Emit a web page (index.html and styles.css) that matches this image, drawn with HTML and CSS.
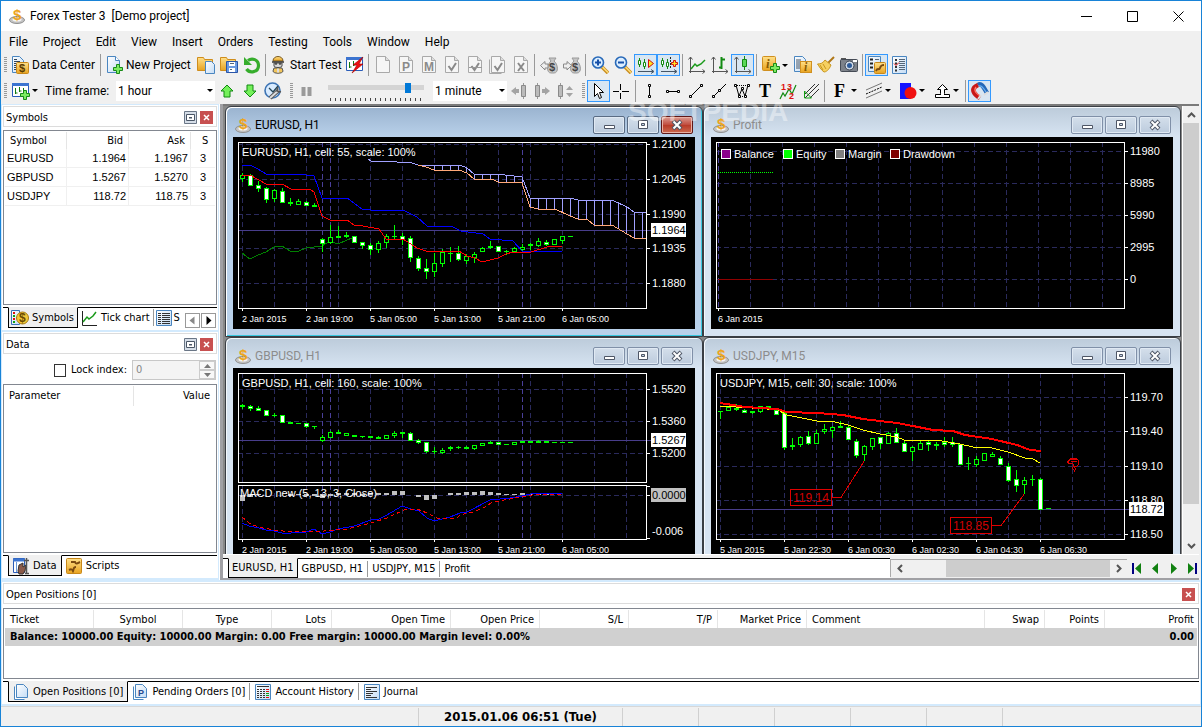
FILE: index.html
```html
<!DOCTYPE html>
<html lang="en">
<head>
<meta charset="utf-8">
<title>Forex Tester 3 [Demo project]</title>
<link rel="stylesheet" href="styles.css">
</head>
<body>
<svg class="defs" aria-hidden="true">
  <defs>
    <linearGradient id="gold" x1="0" y1="0" x2="0" y2="1"><stop offset="0" stop-color="#ffe08a"/><stop offset="1" stop-color="#e8a320"/></linearGradient>
    <linearGradient id="paper" x1="0" y1="0" x2="1" y2="1"><stop offset="0" stop-color="#ffffff"/><stop offset="1" stop-color="#c4dcf5"/></linearGradient>
  </defs>
  <symbol id="i-coin" viewBox="0 0 18 18"><ellipse cx="9" cy="13" rx="7.500" ry="3.500" fill="#c4c4c4" stroke="#909090"/><ellipse cx="9" cy="12.500" rx="4.500" ry="2" fill="#f4f4f4"/></symbol>
  <symbol id="i-data" viewBox="0 0 18 18"><path d="M1.500.5h7l4 4v12h-11z" fill="url(#paper)" stroke="#4a86c0"/><path d="M3 3.500h3M3 5.500h6M3 7.500h5M3 9.500h3M3 11.500h3M3 13.500h3" stroke="#345"/><rect x="5.500" y="6.500" width="12" height="11" rx="1" fill="url(#gold)" stroke="#c8881a"/></symbol>
  <symbol id="i-newdoc" viewBox="0 0 18 18"><path d="M1.500.5h8l4 4v12h-12z" fill="url(#paper)" stroke="#4a86c0"/><path d="M9.500.5v4h4" fill="#fff" stroke="#4a86c0"/><path d="M10.500 8.500h3v3h3v3h-3v3h-3v-3h-3v-3h3z" fill="#7dea62" stroke="#178a17"/></symbol>
  <symbol id="i-open" viewBox="0 0 18 18"><path d="M.5 14.500v-13h6l1 2h8v11z" fill="url(#gold)" stroke="#cf8d1c"/><path d="M8.500 5.500h6l3 3v9h-9z" fill="url(#paper)" stroke="#4a86c0"/></symbol>
  <symbol id="i-fsave" viewBox="0 0 18 18"><path d="M.5 14.500v-13h6l1 2h8v11z" fill="url(#gold)" stroke="#cf8d1c"/><path d="M6.500 5.500h11v11h-11z" fill="#6b9ae0" stroke="#2a55a8"/><path d="M9 6h6v4H9zM9 12h6v4H9z" fill="#fff"/><path d="M10 7.500h4M10 13.500h2" stroke="#567"/></symbol>
  <symbol id="i-refresh" viewBox="0 0 18 18"><path d="M5 4.500c4-3 10.500-1 10.500 5 0 7-9 8-12 3.500" fill="none" stroke="#36ad2c" stroke-width="3.200"/><path d="M1 1v8h8z" fill="#36ad2c"/></symbol>
  <symbol id="i-coolie" viewBox="0 0 18 18"><path d="M4 5c0-6 10-6 10 0z" fill="url(#gold)" stroke="#7a5a22"/><path d="M3 6h12" stroke="#333" stroke-width="1.500"/><path d="M5 7h8v3c0 2-8 2-8 0z" fill="#d9d9d9" stroke="#444"/><path d="M6 8h2M10 8h2" stroke="#111"/><path d="M5 12h8l1 3c0 3-10 3-10 0z" fill="#f2c55a" stroke="#555"/><path d="M8 12.500h2v4H8z" fill="#ddd"/></symbol>
  <symbol id="i-chartwin" viewBox="0 0 18 18"><path d="M.5 1.500h16v13H.5z" fill="#fff" stroke="#2a5cb8"/><path d="M0 1h17v3H0z" fill="#3c74d0"/><path d="M3.500 6v6M3.500 11h2M7.500 5v5M7.500 9h2M11.500 6v5" stroke="#127a12" fill="none"/></symbol>
  <symbol id="i-bolt" viewBox="0 0 18 18"><use href="#i-chartwin"/><path d="M17 1L7 9h4l-5 8 11-9h-4z" fill="#f01010" stroke="#a00000" stroke-width=".6"/></symbol>
  <symbol id="i-pluschart" viewBox="0 0 18 18"><use href="#i-chartwin"/><path d="M11.500 8.500h3v3h3v3h-3v3h-3v-3h-3v-3h3z" fill="#7dea62" stroke="#178a17"/></symbol>
  <symbol id="i-gdoc" viewBox="0 0 18 18"><path d="M2.500.5h9l4 4v12h-13z" fill="#f6f6f6" stroke="#a9a9a9"/><path d="M11.500.5v4h4" fill="#ddd" stroke="#a9a9a9"/></symbol>
  <symbol id="i-gcheck" viewBox="0 0 18 18"><use href="#i-gdoc"/><path d="M5.500 10l3 4 4.500-7" fill="none" stroke="#8a8a8a" stroke-width="2"/></symbol>
  <symbol id="i-gcheck2" viewBox="0 0 18 18"><use href="#i-gcheck"/><path d="M3 11.500h13" stroke="#999"/></symbol>
  <symbol id="i-gcheck3" viewBox="0 0 18 18"><path d="M.5 3.500v14h12" fill="none" stroke="#a9a9a9"/><use href="#i-gcheck"/></symbol>
  <symbol id="i-gx" viewBox="0 0 18 18"><use href="#i-gdoc"/><path d="M6 7l6 8M12 7l-6 8" stroke="#8a8a8a" stroke-width="2"/></symbol>
  <symbol id="i-bag" viewBox="0 0 18 18"><path d="M9 2h7l-2 3c4 3 5 12 0 12h-3C6 17 7 8 11 5z" fill="#c6c6c6" stroke="#9a9a9a"/></symbol>
  <symbol id="i-bagl" viewBox="0 0 18 18"><use href="#i-bag"/><path d="M.5 9.500L5 5.500v2.500h3v4H5v2z" fill="#eee" stroke="#8a8a8a"/></symbol>
  <symbol id="i-bagr" viewBox="0 0 18 18"><use href="#i-bag"/><path d="M8.500 9.500L4 5.500v2.500H.5v4H4v2z" fill="#eee" stroke="#8a8a8a"/></symbol>
  <symbol id="i-lens" viewBox="0 0 18 18"><path d="M11 11l6 6" stroke="#c98d1e" stroke-width="3.500"/><path d="M11.500 11l5.500 5.500" stroke="#ffdf7a" stroke-width="1.500"/><circle cx="7" cy="6.500" r="5.500" fill="#dceeff" stroke="#2869b8" stroke-width="1.600"/><path d="M4 6.500h6" stroke="#1650a8" stroke-width="2"/></symbol>
  <symbol id="i-zin" viewBox="0 0 18 18"><use href="#i-lens"/><path d="M7 3.500v6" stroke="#1650a8" stroke-width="2"/></symbol>
  <symbol id="i-candles" viewBox="0 0 18 18"><path d="M2.500 2v9M7.500 3v10" stroke="#128a12"/><path d="M1.500 4.500h2v4h-2zM6.500 6.500h2v4h-2z" fill="#fff" stroke="#128a12"/><path d="M1 15.500h15M14 13.500l3 2-3 2" fill="none" stroke="#456"/></symbol>
  <symbol id="i-autoscroll" viewBox="0 0 18 18"><use href="#i-candles"/><path d="M11.500 3.500l5 4-5 4z" fill="#ffe420" stroke="#d01010"/></symbol>
  <symbol id="i-shift" viewBox="0 0 18 18"><use href="#i-candles"/><path d="M10.500 1v12" stroke="#222" stroke-dasharray="2 1"/><path d="M13.500 4.500h2v2h2v2h-2v2h-2v-2h-2v-2h2z" fill="#ffe420" stroke="#d01010"/></symbol>
  <symbol id="i-axes" viewBox="0 0 18 18"><path d="M2.500 17V1M.5 3.500L2.500 1l2 2.500M1 15.500h16M14.500 13.500l2.500 2-2.500 2" fill="none" stroke="#555"/></symbol>
  <symbol id="i-line" viewBox="0 0 18 18"><use href="#i-axes"/><path d="M3 13l4-5 2 2 4-2 4-4" fill="none" stroke="#1a9a1a" stroke-width="1.500"/></symbol>
  <symbol id="i-tick" viewBox="0 0 18 18"><path d="M2.500 2v14.500H17" fill="none" stroke="#222"/><path d="M3 13l4-5 2 2 4-3 3-4" fill="none" stroke="#1a9a1a" stroke-width="1.500"/></symbol>
  <symbol id="i-bars" viewBox="0 0 18 18"><use href="#i-axes"/><path d="M10.500 1v12M8 11.500h2M11 3.500h3" fill="none" stroke="#138a13" stroke-width="2"/></symbol>
  <symbol id="i-candle" viewBox="0 0 18 18"><use href="#i-axes"/><path d="M10.500 0v14" stroke="#138a13"/><path d="M8.500 3.500h4v7h-4z" fill="#59d859" stroke="#138a13"/></symbol>
  <symbol id="i-info" viewBox="0 0 18 18"><rect x=".5" y=".5" width="13" height="14" rx="1" fill="url(#gold)" stroke="#d09020"/></symbol>
  <symbol id="i-infoplus" viewBox="0 0 18 18"><use href="#i-info"/><path d="M11.500 7.500h3v3h3v3h-3v3h-3v-3h-3v-3h3z" fill="#7dea62" stroke="#178a17"/></symbol>
  <symbol id="i-infodoc" viewBox="0 0 18 18"><path d="M.5.5h8l3 3v12H.5z" fill="url(#paper)" stroke="#4a86c0"/><path d="M2 4h5M2 6h5M2 8h5M2 10h5M2 12h5" stroke="#456"/><rect x="6.500" y="5.500" width="11" height="11" fill="url(#gold)" stroke="#d09020"/></symbol>
  <symbol id="i-broom" viewBox="0 0 18 18"><path d="M11 7l6-6" stroke="#b07818" stroke-width="2"/><path d="M8 4l6 5c-2 5-5 7-7 7C4 14 2 10 .5 8 4 8 6 7 8 4z" fill="#f6d060" stroke="#c8961e"/><path d="M3 9l3 5M6 8l3 5" stroke="#c8961e"/></symbol>
  <symbol id="i-camera" viewBox="0 0 18 18"><path d="M1 2h5v2H1z" fill="#555"/><rect x=".5" y="3.500" width="17" height="12" rx="1" fill="#7d828a" stroke="#454b55"/><path d="M13 4h4v2h-4z" fill="#fff"/><circle cx="9.500" cy="9.500" r="4.500" fill="#cfd8e4" stroke="#384250"/><circle cx="9.500" cy="9.500" r="2.500" fill="#2c5a98"/></symbol>
  <symbol id="i-list" viewBox="0 0 18 18"><path d="M1.500.5h14v17h-14z" fill="url(#paper)" stroke="#4a86c0"/><path d="M4 4h2M4 7.500h2M4 11h2M4 14.500h2" stroke="#333" stroke-width="2"/><path d="M8 3.500h6M8 5.500h6M8 7.500h6M8 9.500h6M8 11.500h6M8 13.500h6" stroke="#567"/><path d="M3 7.500l2 2 3-3" stroke="#e01010" fill="none"/></symbol>
  <symbol id="i-listscript" viewBox="0 0 18 18"><path d="M.5.5h12v15H.5z" fill="url(#paper)" stroke="#4a86c0"/><path d="M2 3.500h3M2 7.500h3M2 11.500h3" stroke="#222" stroke-width="2"/><path d="M7 3.500h4" stroke="#567"/><rect x="6.500" y="6.500" width="11" height="11" rx="1" fill="url(#gold)" stroke="#c8881a"/><path d="M8 15c2-4 3 0 4-3s2-3 4-3" fill="none" stroke="#7a4a10" stroke-width="2"/></symbol>
  <symbol id="i-script" viewBox="0 0 18 18"><rect x="1.500" y="1.500" width="15" height="15" rx="1" fill="url(#gold)" stroke="#c8881a"/><path d="M4 13c2-1 3-1 4 1 1-2 0-4 3-4M6 5h4c1 3 3 1 5 0" fill="none" stroke="#7a4a10" stroke-width="2"/></symbol>
  <symbol id="i-up" viewBox="0 0 18 18"><path d="M9 3l6 6h-3v6H6V9H3z" fill="#74f05a" stroke="#108a10"/></symbol>
  <symbol id="i-down" viewBox="0 0 18 18"><path d="M9 15l6-6h-3V3H6v6H3z" fill="#74f05a" stroke="#108a10"/></symbol>
  <symbol id="i-clock" viewBox="0 0 18 18"><circle cx="8.500" cy="8.500" r="7.500" fill="#d8ebff" stroke="#3d74b4" stroke-width="1.600"/><path d="M5 6l4 4 5-6" fill="none" stroke="#245" stroke-width="1.300"/><path d="M6 16l9-8" stroke="#555" stroke-width="4"/><path d="M6 16l9-8" stroke="#ddd" stroke-width="2"/><path d="M14 5l-1 4 4 1" fill="none" stroke="#555" stroke-width="1.500"/></symbol>
  <symbol id="i-pause" viewBox="0 0 18 18"><path d="M5.500 5v9M11.500 5v9" stroke="#9a9a9a" stroke-width="4"/></symbol>
  <symbol id="i-stepb" viewBox="0 0 18 18"><path d="M1 9l5-4v2h3v4H6v2z" fill="#a4a4a4"/><path d="M13.500 1v16" stroke="#999"/><path d="M11.500 3.500h4v11h-4z" fill="#bbb" stroke="#8a8a8a"/></symbol>
  <symbol id="i-stepf" viewBox="0 0 18 18"><path d="M17 9l-5-4v2H9v4h3v2z" fill="#a4a4a4"/><path d="M4.500 1v16" stroke="#999"/><path d="M2.500 3.500h4v11h-4z" fill="#bbb" stroke="#8a8a8a"/></symbol>
  <symbol id="i-stepm" viewBox="0 0 18 18"><path d="M10 8l3.500-4L17 8zM10 11l3.500 4 3.500-4z" fill="#a4a4a4"/><path d="M4.500 1v16" stroke="#999"/><path d="M2.500 3.500h4v11h-4z" fill="#bbb" stroke="#8a8a8a"/></symbol>
  <symbol id="i-cursor" viewBox="0 0 18 18"><path d="M4.500 1.500v13l3-3 2 5 2-1-2-5h4z" fill="#fff" stroke="#000"/></symbol>
  <symbol id="i-cross" viewBox="0 0 18 18"><path d="M7.500 2v6M7.500 11v6M0 9.500h6M9 9.500h7" stroke="#000"/></symbol>
  <symbol id="i-vline" viewBox="0 0 18 18"><path d="M8.500 4v10" stroke="#000"/><path d="M7.500 2.500h2v2h-2zM7.500 13.500h2v2h-2z" fill="#fff" stroke="#000"/></symbol>
  <symbol id="i-hline" viewBox="0 0 18 18"><path d="M4 9.500h10" stroke="#000"/><path d="M2.500 8.500h2v2h-2zM13.500 8.500h2v2h-2z" fill="#fff" stroke="#000"/></symbol>
  <symbol id="i-seg" viewBox="0 0 18 18"><path d="M4 14L14 4" stroke="#000"/><path d="M2.500 13.500h2v2h-2zM13.500 2.500h2v2h-2z" fill="#fff" stroke="#000"/></symbol>
  <symbol id="i-ray" viewBox="0 0 18 18"><path d="M4 14L16 2" stroke="#000"/><path d="M2.500 13.500h2v2h-2zM8.500 7.500h2v2h-2z" fill="#fff" stroke="#000"/></symbol>
  <symbol id="i-wave" viewBox="0 0 18 18"><path d="M3 3l3 11 3-7 3 7 3-11" fill="none" stroke="#000"/><path d="M4 3.500h11M7 14.500h5" fill="none" stroke="#000" stroke-dasharray="1 1"/><path d="M1.500 2.500h2v2h-2zM14.500 2.500h2v2h-2zM5.500 13.500h2v2h-2zM11.500 13.500h2v2h-2zM8.500 5.500h2v2h-2z" fill="#fff" stroke="#000"/></symbol>
  <symbol id="i-waves" viewBox="0 0 18 18"><path d="M1 17l3-6 2 3 4-7 3 5 4-9" fill="none" stroke="#108a10" stroke-width="1.200"/></symbol>
  <symbol id="i-fan" viewBox="0 0 18 18"><path d="M3 12L13 2M3 16L17 2M8 16l9-9" stroke="#333"/><path d="M2.500 9v7h7z" fill="none" stroke="#12a012"/></symbol>
  <symbol id="i-chan" viewBox="0 0 18 18"><path d="M1 8l16-7M1 16l16-7" stroke="#777"/><path d="M1 12l16-7" stroke="#000" stroke-dasharray="2 1"/></symbol>
  <symbol id="i-shapes" viewBox="0 0 18 18"><path d="M1 1h11v16H1z" fill="#1414ff"/><circle cx="11.500" cy="11" r="6" fill="#f01010"/></symbol>
  <symbol id="i-export" viewBox="0 0 18 18"><path d="M9.500 2.500l5 5h-3v4h-4v-4h-3zM2.500 12.500h14v3h-14z" fill="#fff" stroke="#000"/><path d="M8 12h3" stroke="#fff" stroke-width="2"/></symbol>
  <symbol id="i-magnet" viewBox="0 0 18 18"><path d="M7 3c4-3 7 5 9 8" fill="none" stroke="#2468b8" stroke-width="4.500"/><path d="M7 3C-2 7 4 13 9 16" fill="none" stroke="#c81818" stroke-width="4.500"/><path d="M8 4c3-1 5 3 7 6" fill="none" stroke="#6ab0f0" stroke-width="1.300"/><path d="M5 5c-3 4 1 7 4 9" fill="none" stroke="#ff7a6a" stroke-width="1.300"/><path d="M7 17l3-4M13 13l4-3" stroke="#ddd" stroke-width="2"/></symbol>
  <symbol id="i-symbols" viewBox="0 0 18 18"><path d="M.5 1.500h8v14h-8z" fill="url(#paper)" stroke="#3a70b8"/><path d="M2 4h2M2 10h2" stroke="#e01010" stroke-width="2"/><path d="M2 7h2M2 13h2" stroke="#10a010" stroke-width="2"/><circle cx="11.500" cy="9" r="6" fill="#f4c93a" stroke="#a87a10"/></symbol>
  <symbol id="i-specs" viewBox="0 0 18 18"><path d="M1.500 1.500h15v15h-15z" fill="url(#paper)" stroke="#4a86c0"/><path d="M3 4.500h12M3 6.500h12M3 8.500h12M3 10.500h12M3 12.500h12M3 14.500h12" stroke="#333" stroke-dasharray="3 1 8 2"/></symbol>
  <symbol id="i-history" viewBox="0 0 18 18"><path d="M1.500 1.500h15v15h-15z" fill="url(#paper)" stroke="#4a86c0"/><path d="M3 3.500h12" stroke="#333"/><path d="M3 6.500h8M3 8.500h8M3 10.500h8M3 12.500h8M3 14.500h8" stroke="#333" stroke-dasharray="2 1"/><path d="M12 6.500h3M12 8.500h3M12 14.500h3" stroke="#e01010"/><path d="M12 10.500h3M12 12.500h3" stroke="#10a010"/></symbol>
  <symbol id="i-journal" viewBox="0 0 18 18"><path d="M1.500 1.500h15v15h-15z" fill="url(#paper)" stroke="#4a86c0"/><path d="M3 4.500h11M3 6.500h5M3 8.500h11M3 10.500h7M3 12.500h5M3 14.500h11" stroke="#333"/></symbol>
  <symbol id="i-docs" viewBox="0 0 18 18"><path d="M2.500 3.500v13h10" fill="#fff" stroke="#4a86c0"/><path d="M4.500 1.500h7l4 4v9h-11z" fill="url(#paper)" stroke="#4a86c0"/></symbol>
  <symbol id="i-datat" viewBox="0 0 18 18"><path d="M1.500 1.500h11v14h-11z" fill="#fff" stroke="#2a5cb8"/><path d="M1 3h12" stroke="#3c74d0" stroke-width="3"/><path d="M4.500 5v10" stroke="#6a9ad8"/><path d="M7 8l4-2v4l3-2-1 6-2 3H7l-1-3z" fill="#8a5a4a" stroke="#333"/><path d="M14.500 1v15M12 3.500h5M13 16.500h4" stroke="#555" stroke-width="1.500"/></symbol>
  <symbol id="i-max" viewBox="0 0 13 13"><path d="M.5.5h12v12H.5z" fill="#d6dee8" stroke="#6a7686"/><path d="M2.500 3.500h8v6h-8z" fill="#fff" stroke="#4a5666"/><path d="M5 6h3v1.500H5z" fill="#4a5666"/></symbol>
  <symbol id="i-close" viewBox="0 0 13 13"><path d="M0 0h13v13H0z" fill="#c75050"/><path d="M4 4l5 5M9 4l-5 5" stroke="#fff" stroke-width="1.500"/></symbol>
  <symbol id="i-wmin" viewBox="0 0 18 12"><path d="M4.500 6.500h10v3h-10z" fill="#fff" stroke="#4e5666"/></symbol>
  <symbol id="i-wmax" viewBox="0 0 18 12"><path d="M4.500 1.500h9v8h-9z" fill="#fff" stroke="#4e5666"/><path d="M7.500 4.500h3v2h-3z" fill="#c4d2e2" stroke="#4e5666"/></symbol>
  <symbol id="i-wclose" viewBox="0 0 18 12"><path d="M5 2l8 8M13 2l-8 8" stroke="#4e5666" stroke-width="4"/><path d="M5.500 2.500l7 7M12.500 2.500l-7 7" stroke="#fff" stroke-width="2"/></symbol>
</svg>

<header class="titlebar">
  <svg class="ico"><use href="#i-coin"/><text x="5" y="13" class="sans coin">$</text></svg>
  <h1>Forex Tester 3&nbsp; [Demo project]</h1>
  <button aria-label="Minimize"><svg viewBox="0 0 11 11"><path d="M0 5.500h11" stroke="#000"/></svg></button>
  <button aria-label="Maximize"><svg viewBox="0 0 11 11"><path d="M.5.5h10v10H.5z" fill="none" stroke="#000"/></svg></button>
  <button aria-label="Close"><svg viewBox="0 0 11 11"><path d="M.5.5l10 10M10.500.5l-10 10" stroke="#000"/></svg></button>
</header>
<nav class="menubar">
  <button>File</button><button>Project</button><button>Edit</button><button>View</button><button>Insert</button><button>Orders</button><button>Testing</button><button>Tools</button><button>Window</button><button>Help</button>
</nav>

<div class="toolbar" role="toolbar" aria-label="Standard">
  <span class="grip"></span>
  <button class="tb data"><svg class="ico"><use href="#i-data"/><text x="8" y="16" class="sans" font-size="11" fill="#5a3a00">$</text></svg>Data Center</button>
  <span class="sep"></span>
  <button class="tb project"><svg class="ico"><use href="#i-newdoc"/></svg>New Project</button>
  <button class="tb" aria-label="Open project"><svg class="ico"><use href="#i-open"/></svg></button>
  <button class="tb" aria-label="Save project"><svg class="ico"><use href="#i-fsave"/></svg></button>
  <button class="tb" aria-label="Refresh"><svg class="ico"><use href="#i-refresh"/></svg></button>
  <span class="sep"></span>
  <button class="tb start"><svg class="ico"><use href="#i-coolie"/></svg>Start Test</button>
  <button class="tb" aria-label="Quick test"><svg class="ico"><use href="#i-bolt"/></svg></button>
  <span class="sep"></span>
  <button class="tb" aria-label="New order"><svg class="ico"><use href="#i-gdoc"/></svg></button>
  <button class="tb" aria-label="Pending order"><svg class="ico"><use href="#i-gdoc"/><text x="5" y="15" class="sans" font-size="12" fill="#8a8a8a">P</text></svg></button>
  <button class="tb" aria-label="Modify order"><svg class="ico"><use href="#i-gdoc"/><text x="4" y="15" class="sans" font-size="12" fill="#8a8a8a">M</text></svg></button>
  <button class="tb" aria-label="Close order"><svg class="ico"><use href="#i-gcheck"/></svg></button>
  <button class="tb" aria-label="Partial close"><svg class="ico"><use href="#i-gcheck2"/></svg></button>
  <button class="tb" aria-label="Close all"><svg class="ico"><use href="#i-gcheck3"/></svg></button>
  <button class="tb" aria-label="Delete order"><svg class="ico"><use href="#i-gx"/></svg></button>
  <span class="sep"></span>
  <button class="tb" aria-label="Deposit"><svg class="ico"><use href="#i-bagl"/><text x="9" y="15" class="sans" font-size="11" fill="#444">$</text></svg></button>
  <button class="tb" aria-label="Withdraw"><svg class="ico"><use href="#i-bagr"/><text x="9" y="15" class="sans" font-size="11" fill="#444">$</text></svg></button>
  <span class="sep"></span>
  <button class="tb" aria-label="Zoom in"><svg class="ico"><use href="#i-zin"/></svg></button>
  <button class="tb" aria-label="Zoom out"><svg class="ico"><use href="#i-lens"/></svg></button>
  <button class="tb on" aria-label="Auto scroll"><svg class="ico"><use href="#i-autoscroll"/></svg></button>
  <button class="tb on" aria-label="Chart shift"><svg class="ico"><use href="#i-shift"/></svg></button>
  <span class="sep"></span>
  <button class="tb" aria-label="Line chart"><svg class="ico"><use href="#i-line"/></svg></button>
  <button class="tb" aria-label="Bar chart"><svg class="ico"><use href="#i-bars"/></svg></button>
  <button class="tb on" aria-label="Candle chart"><svg class="ico"><use href="#i-candle"/></svg></button>
  <span class="sep"></span>
  <button class="tb drop" aria-label="Add indicator"><svg class="ico"><use href="#i-infoplus"/><text x="4" y="12" class="serif" font-style="italic" font-size="13" fill="#8a5a00">i</text></svg><i class="arrow"></i></button>
  <button class="tb" aria-label="Indicators"><svg class="ico"><use href="#i-infodoc"/><text x="10" y="15" class="serif" font-style="italic" font-size="12" fill="#8a5a00">i</text></svg></button>
  <button class="tb" aria-label="Clear"><svg class="ico"><use href="#i-broom"/></svg></button>
  <button class="tb" aria-label="Snapshot"><svg class="ico"><use href="#i-camera"/></svg></button>
  <span class="sep"></span>
  <button class="tb on" aria-label="Scripts"><svg class="ico"><use href="#i-listscript"/></svg></button>
  <button class="tb" aria-label="Options"><svg class="ico"><use href="#i-list"/></svg></button>
</div>
<div class="toolbar second" role="toolbar" aria-label="Testing">
  <span class="grip"></span>
  <button class="tb drop" aria-label="New chart"><svg class="ico"><use href="#i-pluschart"/></svg><i class="arrow"></i></button>
  <label class="tflabel" for="tf">Time frame:</label>
  <span class="combo tf"><select id="tf"><option>1 hour</option></select><i class="arrow"></i></span>
  <button class="tb" aria-label="Buy"><svg class="ico"><use href="#i-up"/></svg></button>
  <button class="tb" aria-label="Sell"><svg class="ico"><use href="#i-down"/></svg></button>
  <button class="tb" aria-label="Time settings"><svg class="ico"><use href="#i-clock"/></svg></button>
  <span class="grip"></span>
  <button class="tb" aria-label="Pause"><svg class="ico"><use href="#i-pause"/></svg></button>
  <span class="speed"><input type="range" min="0" max="20" value="17" aria-label="Speed"></span>
  <span class="combo step"><select aria-label="Step"><option>1 minute</option></select><i class="arrow"></i></span>
  <button class="tb" aria-label="Step back"><svg class="ico"><use href="#i-stepb"/></svg></button>
  <button class="tb" aria-label="Step forward"><svg class="ico"><use href="#i-stepf"/></svg></button>
  <button class="tb" aria-label="Step size"><svg class="ico"><use href="#i-stepm"/></svg></button>
  <span class="grip"></span>
  <button class="tb on" aria-label="Pointer"><svg class="ico"><use href="#i-cursor"/></svg></button>
  <button class="tb" aria-label="Crosshair"><svg class="ico"><use href="#i-cross"/></svg></button>
  <span class="sep"></span>
  <button class="tb" aria-label="Vertical line"><svg class="ico"><use href="#i-vline"/></svg></button>
  <button class="tb" aria-label="Horizontal line"><svg class="ico"><use href="#i-hline"/></svg></button>
  <button class="tb" aria-label="Trend line"><svg class="ico"><use href="#i-seg"/></svg></button>
  <button class="tb" aria-label="Ray"><svg class="ico"><use href="#i-ray"/></svg></button>
  <button class="tb" aria-label="Polyline"><svg class="ico"><use href="#i-wave"/></svg></button>
  <button class="tb" aria-label="Text"><svg class="ico"><text x="3" y="15" class="serif" font-size="18">T</text></svg></button>
  <button class="tb" aria-label="Waves"><svg class="ico"><use href="#i-waves"/><g class="sans" font-size="9" fill="#e01010"><text x="2" y="8">1</text><text x="8" y="8">3</text><text x="10" y="17">2</text></g></svg></button>
  <button class="tb" aria-label="Fan"><svg class="ico"><use href="#i-fan"/></svg></button>
  <span class="sep"></span>
  <button class="tb drop" aria-label="Fibonacci"><svg class="ico"><text x="3" y="15" class="serif" font-size="18">F</text></svg><i class="arrow"></i></button>
  <button class="tb drop" aria-label="Channels"><svg class="ico"><use href="#i-chan"/></svg><i class="arrow"></i></button>
  <button class="tb drop" aria-label="Shapes"><svg class="ico"><use href="#i-shapes"/></svg><i class="arrow"></i></button>
  <button class="tb drop" aria-label="Export"><svg class="ico"><use href="#i-export"/></svg><i class="arrow"></i></button>
  <span class="sep"></span>
  <button class="tb on" aria-label="Magnet"><svg class="ico"><use href="#i-magnet"/></svg></button>
</div>

<div class="middle">
  <aside class="dock">
    <section class="panel">
      <div class="phead"><h2>Symbols</h2><button aria-label="Maximize panel"><svg><use href="#i-max"/></svg></button><button aria-label="Close panel"><svg><use href="#i-close"/></svg></button></div>
      <div class="pbody">
        <table class="symbols">
          <colgroup><col class="c1"><col class="c2"><col class="c2"><col></colgroup>
          <thead><tr><th>Symbol</th><th>Bid</th><th>Ask</th><th>S</th></tr></thead>
          <tbody>
            <tr><td>EURUSD</td><td>1.1964</td><td>1.1967</td><td>3</td></tr>
            <tr><td>GBPUSD</td><td>1.5267</td><td>1.5270</td><td>3</td></tr>
            <tr><td>USDJPY</td><td>118.72</td><td>118.75</td><td>3</td></tr>
          </tbody>
        </table>
      </div>
      <div class="tabs tight"><button class="cur"><svg class="ico"><use href="#i-symbols"/><text x="8" y="13" class="sans" font-size="12" fill="#6a4a00">$</text></svg>Symbols</button><button><svg class="ico"><use href="#i-tick"/></svg>Tick chart</button><button class="clip"><svg class="ico"><use href="#i-specs"/></svg>S</button>
        <span class="scroller"><button aria-label="Previous tabs"><svg viewBox="0 0 13 13"><path d="M8.500 2.500v8l-5-4z" fill="#888"/></svg></button><button aria-label="Next tabs"><svg viewBox="0 0 13 13"><path d="M4.500 2v9l5-4.500z"/></svg></button></span></div>
    </section>
    <section class="panel grow">
      <div class="phead"><h2>Data</h2><button aria-label="Maximize panel"><svg><use href="#i-max"/></svg></button><button aria-label="Close panel"><svg><use href="#i-close"/></svg></button></div>
      <div class="lock"><input type="checkbox" id="lock"><label for="lock">Lock index:</label><span class="spin"><input type="text" value="0" aria-label="Index" disabled><span class="spinb"><button aria-label="Increase"><svg viewBox="0 0 7 4"><path d="M0 4l3.500-4L7 4z" fill="#777"/></svg></button><button aria-label="Decrease"><svg viewBox="0 0 7 4"><path d="M0 0l3.500 4L7 0z" fill="#777"/></svg></button></span></span></div>
      <div class="pbody"><table class="params"><thead><tr><th>Parameter</th><th>Value</th></tr></thead></table></div>
      <div class="tabs"><button class="cur"><svg class="ico"><use href="#i-datat"/></svg>Data</button><button><svg class="ico"><use href="#i-script"/></svg>Scripts</button></div>
    </section>
  </aside>

  <main class="mdi">
    <div class="desk">
      <div class="windows">
        <article class="win active">
          <header><svg class="ico"><use href="#i-coin"/><text x="5" y="13" class="sans coin">$</text></svg><h3>EURUSD, H1</h3><button aria-label="Minimize"><svg><use href="#i-wmin"/></svg></button><button aria-label="Restore"><svg><use href="#i-wmax"/></svg></button><button class="x" aria-label="Close"><svg><use href="#i-wclose"/></svg></button></header>
          <div class="view"><svg class="chart" id="eurusd" viewBox="233 137 462 192">
            <g class="plot"></g>
            <g class="t11"><text x="242" y="156">EURUSD, H1, cell: 55, scale: 100%</text>
            <text x="652" y="148">1.2100</text><text x="652" y="183">1.2045</text><text x="652" y="218">1.1990</text><text x="652" y="252">1.1935</text><text x="652" y="287">1.1880</text></g>
            <path class="tag" d="M651 223h35v14h-35z"/><text class="tagt" x="652" y="234">1.1964</text>
            <g class="t9"><text x="242" y="322">2 Jan 2015</text><text x="306" y="322">2 Jan 19:00</text><text x="370" y="322">5 Jan 05:00</text><text x="434" y="322">5 Jan 13:00</text><text x="498" y="322">5 Jan 21:00</text><text x="562" y="322">6 Jan 05:00</text></g>
          </svg></div>
        </article>
        <article class="win">
          <header><svg class="ico"><use href="#i-coin"/><text x="5" y="13" class="sans coin">$</text></svg><h3>Profit</h3><button aria-label="Minimize"><svg><use href="#i-wmin"/></svg></button><button aria-label="Restore"><svg><use href="#i-wmax"/></svg></button><button aria-label="Close"><svg><use href="#i-wclose"/></svg></button></header>
          <div class="view"><svg class="chart" id="profit" viewBox="711 137 462 192">
            <g class="plot"></g>
            <path d="M718 172.500h55" stroke="#00ff00" stroke-dasharray="1 1"/><path d="M718 279.500h55" stroke="#900000"/>
            <g stroke="#fff"><path d="M721.500 149.500h9v9h-9z" fill="#8b008b"/><path d="M783.500 149.500h9v9h-9z" fill="#00ff00"/><path d="M835.500 149.500h9v9h-9z" fill="#808080"/><path d="M890.500 149.500h9v9h-9z" fill="#800000"/></g>
            <g class="t11"><text x="734" y="158">Balance</text><text x="796" y="158">Equity</text><text x="848" y="158">Margin</text><text x="903" y="158">Drawdown</text>
            <text x="1130" y="155">11980</text><text x="1130" y="187">8985</text><text x="1130" y="219">5990</text><text x="1130" y="251">2995</text><text x="1130" y="283">0</text></g>
            <g class="t9"><text x="718" y="322">6 Jan 2015</text></g>
          </svg></div>
        </article>
        <article class="win">
          <header><svg class="ico"><use href="#i-coin"/><text x="5" y="13" class="sans coin">$</text></svg><h3>GBPUSD, H1</h3><button aria-label="Minimize"><svg><use href="#i-wmin"/></svg></button><button aria-label="Restore"><svg><use href="#i-wmax"/></svg></button><button aria-label="Close"><svg><use href="#i-wclose"/></svg></button></header>
          <div class="view"><svg class="chart" id="gbpusd" viewBox="233 368 462 192">
            <g class="plot"></g>
            <g class="t11"><text x="242" y="387">GBPUSD, H1, cell: 160, scale: 100%</text><text x="240" y="497">MACD new (5, 13, 3, Close)</text>
            <text x="652" y="393">1.5520</text><text x="652" y="425">1.5360</text><text x="652" y="457">1.5200</text><text x="652" y="535">-0.006</text></g>
            <path class="tag" d="M651 433h35v14h-35z"/><text class="tagt" x="652" y="444">1.5267</text>
            <path class="tag gray" d="M651 488h35v14h-35z"/><text class="tagt" x="652" y="499">0.0000</text>
            <g class="t9"><text x="242" y="553">2 Jan 2015</text><text x="306" y="553">2 Jan 19:00</text><text x="370" y="553">5 Jan 05:00</text><text x="434" y="553">5 Jan 13:00</text><text x="498" y="553">5 Jan 21:00</text><text x="562" y="553">6 Jan 05:00</text></g>
          </svg></div>
        </article>
        <article class="win">
          <header><svg class="ico"><use href="#i-coin"/><text x="5" y="13" class="sans coin">$</text></svg><h3>USDJPY, M15</h3><button aria-label="Minimize"><svg><use href="#i-wmin"/></svg></button><button aria-label="Restore"><svg><use href="#i-wmax"/></svg></button><button aria-label="Close"><svg><use href="#i-wclose"/></svg></button></header>
          <div class="view"><svg class="chart" id="usdjpy" viewBox="711 368 462 192">
            <g class="plot"></g>
            <g fill="none" stroke="#e00000"><path d="M790.500 489.500h41v16h-41zM832 497.500h9l23-36"/><path d="M950.500 517.500h41v16h-41zM992 525.500h9l23-31"/><path d="M1067.500 461.500l2-1 1-2h6l2 2v4l-2 2h-2l-2-3h-4zM1070 459.500h7M1071 461.500h6M1073 464v2M1073.500 466l-1 2 2 3 1-2-1-2"/></g>
            <g class="note"><text x="793" y="502">119.14</text><text x="953" y="530">118.85</text></g>
            <g class="t11"><text x="720" y="387">USDJPY, M15, cell: 30, scale: 100%</text>
            <text x="1130" y="401">119.70</text><text x="1130" y="435">119.40</text><text x="1130" y="470">119.10</text><text x="1130" y="504">118.80</text><text x="1130" y="538">118.50</text></g>
            <path class="tag" d="M1129 502h35v14h-35z"/><text class="tagt" x="1130" y="513">118.72</text>
            <g class="t9"><text x="720" y="553">5 Jan 2015</text><text x="784" y="553">5 Jan 22:30</text><text x="848" y="553">6 Jan 00:30</text><text x="912" y="553">6 Jan 02:30</text><text x="976" y="553">6 Jan 04:30</text><text x="1040" y="553">6 Jan 06:30</text></g>
          </svg></div>
        </article>
      </div>
      <div class="vscroll"><button aria-label="Scroll up"><svg viewBox="0 0 9 6"><path d="M1 5l3.500-3.500L8 5" fill="none" stroke="#555" stroke-width="2"/></svg></button><div class="track"><div class="thumb"></div></div><button aria-label="Scroll down"><svg viewBox="0 0 9 6"><path d="M1 1l3.500 3.500L8 1" fill="none" stroke="#555" stroke-width="2"/></svg></button></div>
    </div>
    <div class="strip">
      <div class="wtabs"><button class="cur">EURUSD, H1</button><button>GBPUSD, H1</button><button>USDJPY, M15</button><button>Profit</button></div>
      <div class="hscroll"><button aria-label="Scroll left"><svg viewBox="0 0 6 9"><path d="M5 1L1.500 4.500 5 8" fill="none" stroke="#555" stroke-width="2"/></svg></button><div class="track"><div class="thumb"></div></div><button aria-label="Scroll right"><svg viewBox="0 0 6 9"><path d="M1 1l3.500 3.500L1 8" fill="none" stroke="#555" stroke-width="2"/></svg></button></div>
      <div class="navs">
        <button aria-label="First"><svg viewBox="0 0 10 11"><path d="M1 0v11" stroke="#000080" stroke-width="2"/><path d="M9 0v11L3 5.500z" fill="#108010"/></svg></button>
        <button aria-label="Back"><svg viewBox="0 0 10 11"><path d="M8 0v11L2 5.500z" fill="#108010"/></svg></button>
        <button aria-label="Forward"><svg viewBox="0 0 10 11"><path d="M2 0v11l6-5.500z" fill="#108010"/></svg></button>
        <button aria-label="Last"><svg viewBox="0 0 10 11"><path d="M1 0v11l6-5.500z" fill="#108010"/><path d="M9 0v11" stroke="#000080" stroke-width="2"/></svg></button>
      </div>
    </div>
    <div class="mark" aria-hidden="true">SOFTPEDIA</div>
  </main>
</div>

<section class="panel bottom">
  <div class="phead"><h2>Open Positions [0]</h2><button aria-label="Close panel"><svg><use href="#i-close"/></svg></button></div>
  <div class="pbody">
    <table class="positions">
      <colgroup><col class="w90"><col class="w90"><col class="w90"><col class="w60"><col class="w120"><col class="w90"><col class="w90"><col class="w90"><col class="w90"><col><col class="w60"><col class="w60"><col class="wlast"></colgroup>
      <thead><tr><th class="l">Ticket</th><th class="c">Symbol</th><th class="c">Type</th><th>Lots</th><th>Open Time</th><th>Open Price</th><th>S/L</th><th>T/P</th><th>Market Price</th><th class="l">Comment</th><th>Swap</th><th>Points</th><th>Profit</th></tr></thead>
      <tbody><tr><td colspan="12" class="l">Balance: 10000.00 Equity: 10000.00 Margin: 0.00 Free margin: 10000.00 Margin level: 0.00%</td><td>0.00</td></tr></tbody>
    </table>
  </div>
  <div class="tabs"><button class="cur"><svg class="ico"><use href="#i-docs"/></svg>Open Positions [0]</button><button><svg class="ico"><use href="#i-docs"/><text x="7" y="13" class="sans" font-size="9" fill="#234a90">P</text></svg>Pending Orders [0]</button><button><svg class="ico"><use href="#i-history"/></svg>Account History</button><button><svg class="ico"><use href="#i-journal"/></svg>Journal</button></div>
</section>
<footer class="status"><span class="empty"></span><span class="time">2015.01.06 06:51 (Tue)</span><span></span><span></span><span></span><span></span><span></span></footer>
<script src="charts.js"></script>
</body>
</html>
```
FILE: styles.css
```css
* { box-sizing: border-box; }
html, body { height: 100%; }
body { margin: 0; display: flex; flex-direction: column; overflow: hidden; border: 1px solid #1883d7; background: #f0f0f0; color: #000; font: 11px/14px "DejaVu Sans Condensed", "DejaVu Sans", sans-serif; }
button { appearance: none; border: 0; padding: 0; margin: 0; background: none; color: inherit; font: inherit; display: flex; align-items: center; justify-content: center; white-space: nowrap; }
h1, h2, h3 { margin: 0; font: inherit; }
svg { flex: none; display: block; }
.defs { width: 0; height: 0; position: absolute; }
.ico { width: 18px; height: 18px; }
.sans { font-family: "Liberation Sans", sans-serif; font-weight: bold; }
.serif { font-family: "Liberation Serif", serif; font-weight: bold; }
.coin { font-size: 15px; fill: #eda51d; }

.titlebar, .menubar, .toolbar, .win header { font: 12px/16px Roboto, sans-serif; }
.titlebar { display: flex; align-items: center; height: 30px; flex: none; background: #fff; padding-left: 7px; }
.titlebar h1 { flex: 1; padding-left: 4px; }
.titlebar button { width: 46px; height: 30px; }
.titlebar button svg { width: 11px; height: 11px; }
.menubar { display: flex; height: 22px; flex: none; padding-left: 1px; }
.menubar button { padding: 0 8px 0 7px; }

.toolbar { display: flex; align-items: center; height: 24px; flex: none; padding-left: 3px; }
.toolbar.second { height: 27px; }
.toolbar > * { flex: none; }
.grip { width: 5px; height: 16px; background: repeating-linear-gradient(#999 0 1px, transparent 1px 2px); border-right: 2px solid #f0f0f0; }
.tb + .grip { margin-left: 6px; }
.tb { width: 23px; height: 22px; }
.tb.on { background: #d8e6f2; border: 1px solid #3399ff; }
.tb.data, .tb.project, .tb.start { justify-content: flex-start; gap: 3px; padding-left: 2px; }
.tb.data { width: 89px; }
.tb.project { width: 91px; padding-left: 3px; gap: 2px; }
.tb.start { width: 75px; padding-left: 1px; }
.tb.drop { width: 32px; gap: 2px; }
.second .sep ~ .tb.drop { width: 34px; }
.arrow { width: 0; height: 0; border: 3px solid transparent; border-top-color: #000; border-bottom: 0; }
.sep { width: 5px; height: 22px; background: linear-gradient(#999, #999) center / 1px 100% no-repeat; }
.tflabel { padding-left: 4px; width: 75px; white-space: nowrap; }
.combo { display: grid; align-items: center; height: 20px; background: #fff; }
.combo select { grid-area: 1 / 1; appearance: none; border: 0; background: none; font: inherit; padding: 0 2px; width: 100%; color: #000; }
.combo .arrow { grid-area: 1 / 1; justify-self: end; margin-right: 2px; }
.combo.tf { width: 99px; }
.combo.step { width: 74px; }
.speed { width: 114px; margin-left: 1px; padding: 0 9px; height: 20px; background: repeating-linear-gradient(90deg, #444 0 1px, transparent 1px 5px) 11px 17px / 92px 3px no-repeat; }
.speed input { appearance: none; display: block; width: 100%; height: 14px; margin: 0; background: linear-gradient(#d4d4d4, #d4d4d4) center / 100% 5px no-repeat; }
.speed input::-webkit-slider-thumb { appearance: none; width: 6px; height: 10px; background: #0078d7; }

.middle { display: flex; flex: 1; min-height: 0; }
.dock { width: 219px; flex: none; display: flex; flex-direction: column; background: #d3eafd; border-right: 1px solid #fff; gap: 2px; padding: 1px 1px 2px; }
.panel { display: flex; flex-direction: column; background: #fff; padding: 1px; }
.panel > * { flex: none; }
.panel .pbody { flex: none; border: 1px solid #828790; padding: 1px; background: #fff; }
.dock .panel .pbody { height: 175px; margin-top: 3px; }
.dock .panel.grow { flex: 1; min-height: 0; }
.dock .panel.grow .pbody { height: auto; flex: 1; }
.phead { display: flex; align-items: center; gap: 3px; height: 21px; border: 1px solid #dcdcdc; padding: 1px 3px 0 2px; }
.phead h2 { flex: 1; padding-top: 1px; }
.phead svg { width: 13px; height: 13px; }
table { border-collapse: separate; border-spacing: 0; table-layout: fixed; width: 100%; }
th { font-weight: normal; }
th, td { padding: 0; white-space: nowrap; overflow: hidden; }
.symbols .c1, .symbols .c2 { width: 62px; }
.symbols th { height: 17px; padding: 1px 5px 0; text-align: right; border-right: 1px solid #e5e5e5; }
.symbols td { height: 19px; padding: 0 2px; text-align: right; border: solid #f0f0f0; border-width: 0 1px 1px 0; font: 11px/14px "Liberation Sans", sans-serif; }
.symbols th:first-child, .symbols td:first-child { text-align: left; }
.symbols th:last-child { text-align: left; padding-left: 11px; border-right: 0; }
.symbols td:last-child { text-align: left; padding-left: 9px; border-right: 0; }
.tabs { display: flex; align-items: stretch; height: 22px; margin-top: 2px; padding-left: 5px; border-top: 1px solid #000; }
.tabs > button { height: 21px; margin-top: -1px; padding: 0 4px 0 3px; gap: 3px; border-top: 1px solid #000; }
.tabs > button + button + button { border-left: 1px solid #999; height: 17px; margin-top: 1px; border-top: 0; padding-left: 4px; }
.tabs > .cur { background: #f0f0f0; border: 1px solid #000; border-top-color: #f0f0f0; }
.tabs.tight > button { padding: 0 3px 0 2px; }
.tabs.tight > button + button + button { padding-left: 1px; padding-right: 1px; }
.tabs.tight .clip { flex: 1; min-width: 0; justify-content: flex-start; gap: 1px; }
.scroller { display: flex; gap: 1px; align-items: center; padding-top: 3px; padding-right: 1px; background: #fff; }
.scroller button { width: 15px; height: 15px; border: 1px solid #999; }
.scroller svg { width: 13px; height: 13px; }
.lock { display: flex; align-items: center; height: 22px; margin-top: 5px; padding-left: 51px; padding-right: 1px; }
.lock input[type=checkbox] { width: 13px; height: 13px; margin: 0; appearance: none; border: 1px solid #333; background: #fff; }
.lock label { padding: 0 5px; flex: 1; white-space: nowrap; }
.spin { display: flex; width: 84px; height: 20px; border: 1px solid #c8c8c8; background: #f4f4f4; }
.spin input { flex: 1; min-width: 0; border: 0; padding: 0 3px; background: none; font: inherit; color: #888; }
.spinb { display: flex; flex-direction: column; width: 16px; }
.spinb button { flex: 1; border: 1px solid #ccc; background: #f8f8f8; }
.spinb svg { width: 7px; height: 4px; }
.params th { height: 20px; padding: 0 5px 0 4px; text-align: right; border-right: 1px solid #e5e5e5; }
.params th:first-child { text-align: left; width: 129px; }
.params th:last-child { border-right: 0; }

.mdi { flex: 1; min-width: 0; display: flex; flex-direction: column; border-left: 3px solid #a0a0a4; border-right: 2px solid #f0f0f0; position: relative; }
.desk { flex: 1; min-height: 0; display: flex; border-top: 2px solid #7a7a7a; border-bottom: 1px solid #fff; background: #888; }
.windows { flex: 1; min-width: 0; overflow: hidden; display: grid; grid-template-columns: 1fr 1fr; grid-auto-rows: 231px; padding: 0 1px 0 2px; }
.win { min-width: 0; display: flex; flex-direction: column; border: 1px solid #3a3e44; border-radius: 6px 6px 0 0; background: linear-gradient(#bccbda, #d7e4f2 30px); box-shadow: inset 1px 1px #f4f8fc; padding: 0 7px 7px; color: #8c8c8c; }
.win.active { background: linear-gradient(#9ab3cf, #b9d1ea 30px); color: #000; box-shadow: inset 1px 1px #fff, inset -1px -1px #38c8e0; }
.win header { display: flex; align-items: center; height: 30px; flex: none; padding: 6px 2px 0 1px; gap: 2px; }
.win h3 { flex: 1; padding-left: 1px; }
.win header button { width: 32px; height: 18px; border: 1px solid #8090a8; border-radius: 2px; background: linear-gradient(#d4dfeb, #bccbdd); box-shadow: inset 0 0 0 1px #e0e9f3; }
.win.active header button { border-color: #5a6c84; }
.win header button.x { background: linear-gradient(#dc9a90, #c04a3c 50%, #b83a28 51%, #cc6a50); border-color: #601818; box-shadow: inset 0 0 0 1px #e8b0a4; }
.win header button svg { width: 18px; height: 12px; }
.view { flex: 1; min-height: 0; background: #000; overflow: hidden; }
.chart { width: 462px; height: 192px; shape-rendering: crispEdges; }
.chart text { font-family: "Liberation Sans", sans-serif; }
.t11, .tagt { font-size: 11px; }
.t11, .t9 { fill: #fff; }
.t9 { font-size: 9px; }
.tag { fill: #fff; }
.tag.gray { fill: #c0c0c0; }
.note { font-size: 12px; fill: #d00000; }
.vscroll { width: 17px; display: flex; flex-direction: column; background: #f0f0f0; border-left: 1px solid #fff; }
.vscroll button { height: 17px; }
.vscroll svg { width: 9px; height: 6px; }
.vscroll .track { flex: 1; }
.vscroll .thumb { height: 92%; background: #cdcdcd; }
.strip { display: flex; height: 25px; flex: none; border-bottom: 2px solid #a0a0a4; padding-top: 3px; }
.wtabs { flex: 1; display: flex; align-items: flex-start; background: #fff; border-top: 1px solid #000; padding-left: 5px; }
.wtabs button { height: 16px; padding: 0 4px; margin-top: 2px; border-left: 1px solid #999; }
.wtabs button.cur { height: 20px; margin-top: -1px; background: #f0f0f0; border: 1px solid #000; border-top-color: #f0f0f0; padding: 0 3px; }
.wtabs .cur + button { border-left: 0; }
.hscroll { display: flex; width: 237px; margin: 1px 0; border: 1px solid #aaa; border-width: 1px 0 0 1px; }
.hscroll button { width: 17px; }
.hscroll svg { width: 6px; height: 9px; }
.hscroll .track { flex: 1; display: flex; justify-content: flex-end; }
.hscroll .thumb { width: 81%; background: #cdcdcd; }
.navs { display: flex; width: 72px; justify-content: space-between; padding: 0 1px 0 4px; }
.navs button { width: 12px; }
.navs svg { width: 10px; height: 11px; }
.mark { position: absolute; left: 405px; top: -8px; font: bold 28px/32px "Liberation Sans", sans-serif; color: #fff; opacity: .4; pointer-events: none; }

.bottom { flex: none; border: solid #d3eafd; border-width: 2px 1px; padding: 1px; }
.bottom .pbody { height: 71px; margin-top: 4px; }
.bottom .phead { padding-right: 3px; }
.positions .w60 { width: 60px; }
.positions .w90 { width: 89px; }
.positions .wlast { width: 92px; }
.positions .w120 { width: 119px; }
.positions th { height: 18px; padding: 1px 5px 0; text-align: right; border-right: 1px solid #e5e5e5; }
.positions th:last-child, .positions td:last-child { border-right: 0; padding-right: 3px; }
.positions td { height: 18px; padding: 0 5px; background: #d0d0d0; text-align: right; font-weight: bold; }
.positions .l { text-align: left; }
.positions .c { text-align: center; }
.status { display: flex; height: 20px; flex: none; align-items: center; border-top: 1px solid #d7d7d7; font: bold 13px/18px "DejaVu Sans Condensed", "DejaVu Sans", sans-serif; }
.status span { height: 18px; border-right: 1px solid #d0d0d0; width: 76px; }
.status .empty { width: 418px; }
.status .time { width: 204px; text-align: center; }
```
FILE: charts.js
```js
const NS = "http://www.w3.org/2000/svg";

function add(g, tag, attrs) {
  const el = document.createElementNS(NS, tag);
  for (const k in attrs) el.setAttribute(k, attrs[k]);
  g.appendChild(el);
}

function plot(id) {
  return document.querySelector("#" + id + " .plot");
}

function grid(g, o) {
  const dash = "5 3";
  for (let x = o.x0; x < o.right; x += 32) {
    add(g, "path", { d: `M${x}.5 ${o.top}V${o.bottom}`, stroke: "#2a2a5c", "stroke-dasharray": dash });
  }
  for (const y of o.rows) {
    add(g, "path", { d: `M${o.left} ${y}.5H${o.right}`, stroke: "#2a2a5c", "stroke-dasharray": dash });
    add(g, "path", { d: `M${o.right} ${y}.5h4`, stroke: "#fff" });
  }
  for (const x of o.marks || []) {
    add(g, "path", { d: `M${x}.5 ${o.top}V${o.bottom}`, stroke: "#4a3f9a", "stroke-dasharray": dash });
  }
  if (o.price) add(g, "path", { d: `M${o.left} ${o.price}.5H${o.right + 5}`, stroke: "#483d8b" });
}

function frame(g, o, ticks) {
  add(g, "path", { d: `M${o.left}.5 ${o.top}.5H${o.right}.5V${o.bottom}.5H${o.left}.5z`, fill: "none", stroke: "#fff" });
  for (const x of ticks) add(g, "path", { d: `M${x}.5 ${o.bottom}v3`, stroke: "#fff" });
}

// Each candle is "high top bottom low", then u (rising) or d (falling).
function candles(g, x0, text) {
  text.trim().split(/\s*,\s*/).forEach((c, i) => {
    const [hi, top, bot, lo, kind] = c.split(" ");
    const x = x0 + i * 8;
    if (+lo > +hi) add(g, "path", { d: `M${x}.5 ${hi}V${+lo + 1}`, stroke: "#00ff00" });
    if (bot - top < 2) {
      add(g, "path", { d: `M${x - 2} ${top}h5v${bot - top + 1}h-5z`, fill: "#00ff00" });
    } else {
      add(g, "path", { d: `M${x - 2}.5 ${top}.5h4v${bot - top}h-4z`, stroke: "#00ff00", fill: kind === "d" ? "#fff" : "#000" });
    }
  });
}

function line(g, color, points, extra) {
  add(g, "polyline", Object.assign({ points, fill: "none", stroke: color }, extra));
}

function level(points, x) {
  const p = points.split(" ").map(s => s.split(",").map(Number));
  for (let i = 1; i < p.length; i++) {
    if (x <= p[i][0]) return p[i - 1][1] + (p[i][1] - p[i - 1][1]) * (x - p[i - 1][0]) / (p[i][0] - p[i - 1][0]);
  }
  return p[p.length - 1][1];
}

const hours = [242, 306, 370, 434, 498, 562];

let g = plot("eurusd");
let o = { left: 238, top: 142, right: 646, bottom: 308, x0: 242, rows: [144, 179, 214, 248, 283], marks: [322, 330, 522], price: 230 };
grid(g, o);
const upper = "368,159 371,161 397,162 412,163 418,165 460,165 467,168 474,174 497,174 522,177 530,198 570,198 578,200 612,200 627,207 634,212 646,212";
const lower = "418,165 426,167 434,170 459,170 467,173 474,179 492,179 498,182 522,183 530,207 538,209 555,209 570,216 578,219 587,219 594,225 612,225 627,234 634,238 646,238";
for (let x = 434; x < 646; x += 8) {
  add(g, "path", { d: `M${x}.5 ${level(upper, x)}V${level(lower, x)}`, stroke: "#a0a0ff" });
}
line(g, "#a0a0ff", upper);
line(g, "#ffa878", lower);
line(g, "#008000", "242,253 250,259 258,255 266,252 274,247 282,246 290,251 299,251 306,248 322,246 330,241 338,244 354,237");
candles(g, 242, `173 175 178 181 u,174 175 185 185 d,181 185 188 191 d,187 188 199 202 d,189 190 198 201 u,188 191 202 202 d,198 202 203 205 d,199 201 204 204 u,201 202 205 205 d,203 205 206 206 d,
238 239 243 251 d,225 237 242 243 u,226 236 237 237 u,232 235 236 237 u,236 236 242 242 d,242 242 245 248 d,243 245 249 254 d,241 243 249 252 u,234 236 242 247 u,225 236 236 238 u,
233 236 239 244 d,236 238 257 261 d,256 258 268 270 d,259 268 271 278 d,253 263 271 276 u,249 252 263 266 u,247 253 253 261 u,246 253 259 260 d,254 256 260 263 u,252 254 257 262 u,
247 248 251 251 u,241 246 247 248 u,246 246 251 251 d,250 251 251 254 u,247 248 251 251 u,244 247 249 250 u,243 244 245 249 u,238 241 245 246 u,240 242 244 245 d,239 239 244 244 u,236 236 240 243 u,236 236 236 236 u`);
line(g, "#0000ff", "242,165 250,165 258,169 266,174 306,175 314,176 322,198 347,198 362,209 371,210 403,210 417,217 427,226 451,226 461,231 483,234 490,239 513,241 522,251 562,251");
line(g, "#ff0000", "242,175 250,175 266,184 282,184 291,189 311,190 314,192 322,216 330,220 347,220 354,225 363,226 379,229 386,239 403,239 417,248 426,251 459,251 467,256 475,258 482,262 490,260 498,258 506,254 513,252 531,252 547,247 562,246");
frame(g, o, hours);

g = plot("profit");
o = { left: 716, top: 142, right: 1124, bottom: 308, x0: 718, rows: [151, 183, 215, 247, 279], marks: [718] };
grid(g, o);
frame(g, o, [718]);

g = plot("gbpusd");
o = { left: 238, top: 373, right: 646, bottom: 482, x0: 242, rows: [389, 421, 453], marks: [322, 330, 522], price: 440 };
grid(g, o);
candles(g, 242, `404 405 406 408 u,405 406 408 410 d,406 408 410 410 d,410 410 415 415 d,413 415 415 416 u,415 415 422 422 d,422 422 423 422 u,423 423 423 423 u,423 423 426 427 d,426 426 426 428 u,
435 437 440 441 u,431 432 437 437 u,430 432 433 433 u,433 433 435 435 u,435 435 436 435 u,436 436 436 437 u,436 436 437 436 u,436 437 438 437 u,435 435 438 438 u,431 433 435 437 u,
433 432 433 437 u,432 433 440 440 d,439 440 442 443 d,442 442 451 452 d,447 451 451 453 u,448 450 452 453 u,446 447 448 450 u,446 447 447 448 u,446 447 448 448 u,445 445 448 449 u,
443 443 445 445 u,441 442 443 443 u,442 442 444 444 d,444 444 444 444 u,442 442 444 444 u,441 441 442 442 u,441 441 442 442 u,440 441 442 442 u,441 441 442 442 u,442 442 442 442 u,442 442 442 442 u,442 442 442 442 u`);
frame(g, o, []);
o = { left: 238, top: 485, right: 646, bottom: 539, x0: 242, rows: [495], marks: [322, 330, 522] };
grid(g, o);
[[242, 495, 6], [250, 494, 3], [258, 494, 1], [290, 494, 2], [298, 494, 1], [306, 494, 2], [314, 494, 2], [322, 494, 4], [330, 494, 2], [338, 493, 2], [346, 493, 2], [354, 493, 2], [362, 494, 2],
 [370, 493, 2], [378, 493, 2], [386, 493, 2], [394, 491, 4], [402, 491, 4], [418, 495, 2], [426, 495, 5], [434, 495, 4], [450, 493, 2], [458, 493, 2], [466, 492, 3], [474, 492, 3], [482, 491, 4],
 [490, 492, 3], [498, 493, 2], [506, 494, 1], [514, 494, 1], [522, 493, 2], [530, 494, 1], [538, 494, 1], [546, 494, 1]].forEach(b => {
  add(g, "path", { d: `M${b[0] - 2} ${b[1]}h5v${b[2]}h-5z`, fill: "#c0c0c0" });
});
line(g, "#0000ff", "242,523 249,526 259,528 266,530 274,531 282,533 291,533 299,532 306,532 314,529 322,534 330,532 338,529 354,526 371,520 379,519 387,515 402,506 411,509 419,511 427,518 434,521 442,519 450,517 460,513 467,512 490,500 510,498 522,496 535,493 562,494");
line(g, "#ff0000", "242,517 249,523 258,527 274,530 291,532 324,531 347,529 371,523 387,518 406,509 417,509 427,513 437,518 446,519 457,518 460,515 473,512 483,508 493,502 510,499 532,495 562,494", { "stroke-dasharray": "4 3" });
frame(g, o, hours);
add(g, "path", { d: "M646 486.500h4M646 538.500h4", stroke: "#fff" });

g = plot("usdjpy");
o = { left: 716, top: 373, right: 1124, bottom: 539, x0: 720, rows: [397, 431, 466, 500, 534], marks: [832], price: 509 };
grid(g, o);
candles(g, 720, `411 411 411 418 u,406 407 410 410 u,404 408 409 410 u,409 410 412 412 d,411 411 412 413 u,406 406 411 412 u,406 406 407 408 u,409 410 414 414 d,412 413 447 449 d,438 445 446 449 u,
436 437 444 446 u,431 436 443 444 d,430 433 443 443 u,424 429 431 433 u,426 427 430 437 u,421 426 427 427 u,426 427 439 439 d,439 441 455 457 d,445 446 454 460 u,438 438 446 449 u,
437 437 443 448 d,432 433 443 443 u,428 433 442 442 d,440 443 451 451 d,446 447 451 460 u,440 443 449 449 u,441 442 444 450 d,442 444 445 449 u,437 442 444 446 d,437 442 444 446 d,
444 444 464 464 d,457 463 463 469 u,456 459 464 466 u,453 453 460 460 u,452 454 456 456 u,456 458 464 464 d,463 466 480 481 d,470 479 485 491 d,477 480 484 493 u,475 479 479 485 u,478 479 509 509 d,508 508 508 508 u`);
line(g, "#ffff00", "720,406 767,409 778,410 787,415 817,421 835,422 848,425 863,430 880,434 897,437 904,440 942,441 960,444 973,447 992,448 1008,452 1025,458 1033,459 1040,463");
line(g, "#ff0000", "720,403 745,407 777,409 787,412 817,413 843,415 863,419 897,423 913,426 933,430 953,431 965,435 992,439 1017,445 1030,450 1041,451", { "stroke-width": 2 });
frame(g, o, [720, 784, 848, 912, 976, 1040]);
```
